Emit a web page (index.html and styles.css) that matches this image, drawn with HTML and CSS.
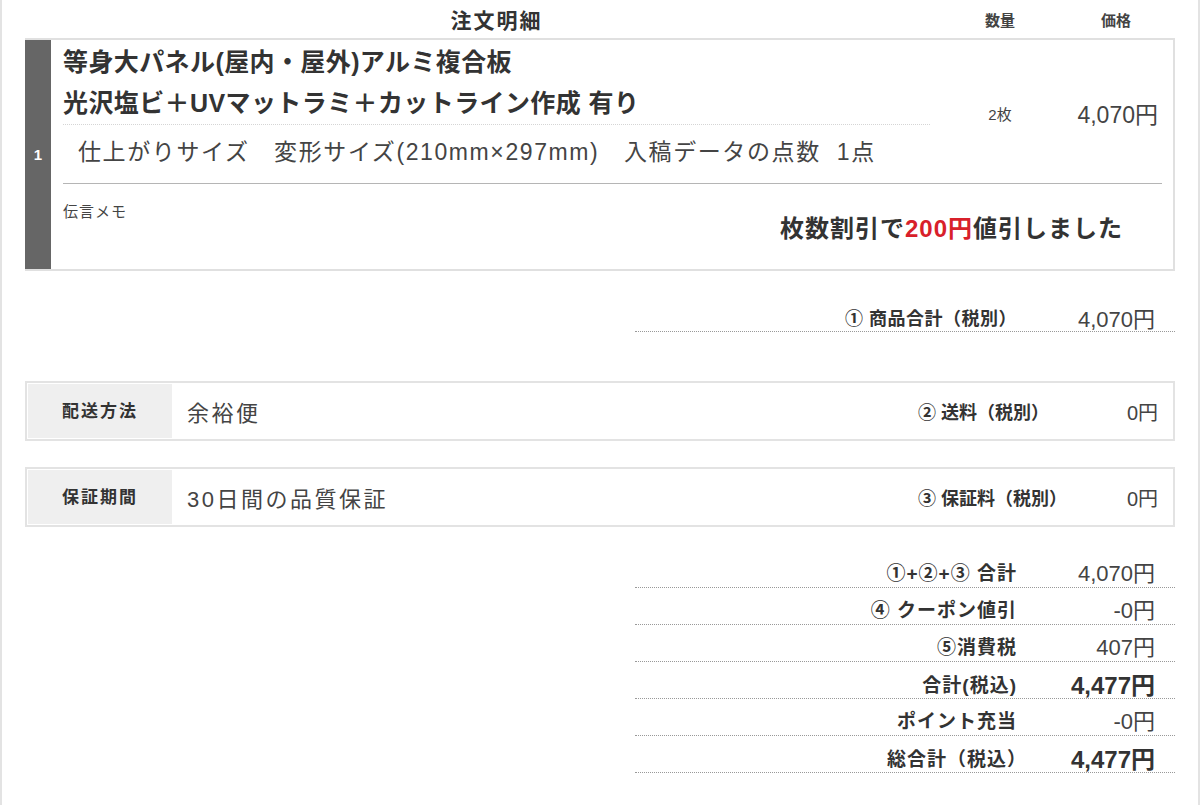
FILE: index.html
```html
<!DOCTYPE html>
<html>
<head>
  <meta charset="utf-8">
  <title>注文明細</title>
  <link rel="stylesheet" href="styles.css">
</head>
<body>
  <div class="page">
    <div class="order-head">
      <div class="head-desc">注文明細</div>
      <div class="head-qty">数量</div>
      <div class="head-price">価格</div>
    </div>

    <div class="item">
      <div class="item-no">1</div>
      <div class="item-body">
        <div class="item-row">
          <div class="item-desc">
            <div class="item-title">等身大パネル(屋内・屋外)アルミ複合板<br>光沢塩ビ＋UVマットラミ＋カットライン作成 有り</div>
            <div class="item-spec">仕上がりサイズ　変形サイズ(210mm×297mm)　入稿データの点数&nbsp;&nbsp;1点</div>
          </div>
          <div class="item-qty">2枚</div>
          <div class="item-price">4,070円</div>
        </div>
        <div class="item-memo">伝言メモ</div>
        <div class="item-discount">枚数割引で<span class="red">200円</span>値引しました</div>
      </div>
    </div>

    <div class="totals sub-total">
      <div class="t-row">
        <div class="t-label">① 商品合計（税別）</div>
        <div class="t-value">4,070円</div>
      </div>
    </div>

    <div class="option-box">
      <div class="opt-label">配送方法</div>
      <div class="opt-value">余裕便</div>
      <div class="opt-fee-label">② 送料（税別）</div>
      <div class="opt-fee">0円</div>
    </div>

    <div class="option-box">
      <div class="opt-label">保証期間</div>
      <div class="opt-value">30日間の品質保証</div>
      <div class="opt-fee-label">③ 保証料（税別）</div>
      <div class="opt-fee">0円</div>
    </div>

    <div class="totals">
      <div class="t-row">
        <div class="t-label">①+②+③ 合計</div>
        <div class="t-value">4,070円</div>
      </div>
      <div class="t-row">
        <div class="t-label">④ クーポン値引</div>
        <div class="t-value">-0円</div>
      </div>
      <div class="t-row">
        <div class="t-label">⑤消費税</div>
        <div class="t-value">407円</div>
      </div>
      <div class="t-row">
        <div class="t-label">合計(税込)</div>
        <div class="t-value strong">4,477円</div>
      </div>
      <div class="t-row">
        <div class="t-label">ポイント充当</div>
        <div class="t-value">-0円</div>
      </div>
      <div class="t-row">
        <div class="t-label paren-end">総合計（税込）</div>
        <div class="t-value strong">4,477円</div>
      </div>
    </div>
  </div>
</body>
</html>
```

FILE: styles.css
```css
body {
  margin: 0;
  font-family: "Liberation Sans", "Noto Sans CJK JP", sans-serif;
  color: #333;
  background: #fff;
}

.page {
  box-sizing: border-box;
  width: 1200px;
  height: 805px;
  border-left: 2px solid #e3e3e3;
  border-right: 2px solid #e3e3e3;
  padding: 0 23px;
  overflow: hidden;
}

/* 見出し */
.order-head {
  display: grid;
  grid-template-columns: 867px 140px 92px;
  padding: 0 13px 0 38px;
  height: 38px;
  align-items: center;
  font-weight: bold;
}

.head-desc {
  text-align: center;
  font-size: 21px;
  letter-spacing: 2px;
}

.head-qty, .head-price {
  text-align: center;
  font-size: 15px;
  color: #444;
}

/* 商品 */
.item {
  display: grid;
  grid-template-columns: 26px 1fr;
  border: 2px solid #e0e0e0;
  border-left: none;
  height: 233px;
  box-sizing: border-box;
}

.item-no {
  background: #666;
  color: #fff;
  font-weight: bold;
  font-size: 15px;
  display: flex;
  align-items: center;
  justify-content: center;
}

.item-body {
  padding: 0 11px 0 12px;
}

.item-row {
  display: grid;
  grid-template-columns: 867px 140px 92px;
  align-items: center;
  border-bottom: 1px solid #b5b5b5;
}

.item-title {
  font-size: 25px;
  letter-spacing: 0.4px;
  font-weight: bold;
  line-height: 41px;
  padding-top: 2px;
  border-bottom: 1px dotted #d5d5d5;
  white-space: nowrap;
}

.item-spec {
  font-size: 23px;
  letter-spacing: 1.6px;
  color: #444;
  line-height: 40px;
  padding: 7px 0 11px 15px;
  white-space: nowrap;
}

.item-qty {
  text-align: center;
  font-size: 15px;
  color: #444;
  margin-top: 3px;
}

.item-price {
  text-align: right;
  padding-right: 4px;
  font-size: 23px;
  color: #444;
  margin-top: 3px;
}

.item-memo {
  font-size: 15px;
  letter-spacing: 1px;
  color: #444;
  padding-top: 20px;
  line-height: 16px;
}

.item-discount {
  margin-top: -6px;
  line-height: 30px;
  text-align: right;
  padding-right: 39px;
  font-size: 24px;
  letter-spacing: 1px;
  font-weight: bold;
}

.red {
  color: #d8202a;
}

/* 合計 */
.totals {
  width: 540px;
  margin: 24px 0 0 auto;
}

.sub-total {
  margin-top: 26px;
}

.t-row {
  display: grid;
  grid-template-columns: 1fr 158px;
  align-items: center;
  height: 37px;
  box-sizing: border-box;
  padding-top: 4px;
  border-bottom: 1px dotted #999;
}

.t-label {
  text-align: right;
  font-weight: bold;
  font-size: 19px;
  letter-spacing: 1px;
}

.t-label.paren-end {
  margin-right: -10px;
}

.sub-total .t-label {
  font-size: 18px;
  letter-spacing: 0.5px;
}

.t-value {
  text-align: right;
  padding-right: 20px;
  font-size: 22px;
  color: #444;
}

.t-value.strong {
  font-weight: bold;
  color: #333;
  font-size: 24px;
}

.sub-total .t-row {
  height: 35px;
}

/* 配送・保証 */
.option-box {
  display: grid;
  grid-template-columns: 144px 1fr 172px 82px;
  align-items: center;
  border: 2px solid #e3e3e3;
  padding: 1px;
  margin-top: 26px;
}

.sub-total + .option-box {
  margin-top: 49px;
}

.opt-label {
  background: #efefef;
  height: 54px;
  line-height: 56px;
  text-align: center;
  font-weight: bold;
  font-size: 17px;
  letter-spacing: 2px;
}

.opt-value {
  padding-left: 15px;
  font-size: 22px;
  letter-spacing: 2.5px;
  color: #444;
}

.opt-fee-label {
  font-weight: bold;
  font-size: 18px;
}

.opt-fee {
  text-align: right;
  padding-right: 14px;
  font-size: 20px;
  color: #444;
}
```
